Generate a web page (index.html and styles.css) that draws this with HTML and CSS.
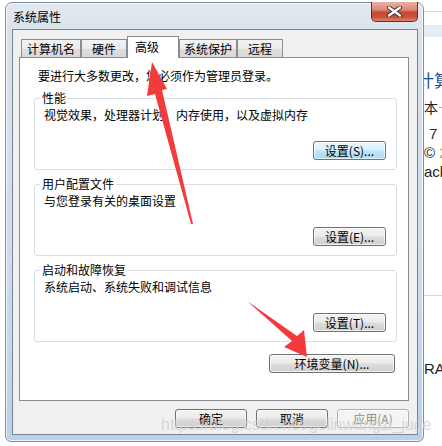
FILE: index.html
```html
<!DOCTYPE html>
<html lang="zh-CN">
<head>
  <meta charset="UTF-8" />
  <title>系统属性</title>
  <link rel="stylesheet" href="styles.css">
</head>
<body>

  <div class="edge-left"></div>

  <div class="window">
    <div class="titlebar">
      <span class="title">系统属性</span>
      <div class="close">
        <svg width="17" height="11" viewBox="0 0 17 11">
          <path d="M3 1.5 L14 9.5 M14 1.5 L3 9.5" stroke="#3b2a2a" stroke-width="4.2" stroke-linecap="round"/>
          <path d="M3 1.5 L14 9.5 M14 1.5 L3 9.5" stroke="#fff" stroke-width="2.4" stroke-linecap="round"/>
        </svg>
      </div>
    </div>

    <div class="client">
      <div class="tabs">
        <div class="tab w1">计算机名</div>
        <div class="tab w2">硬件</div>
        <div class="tab active w3">高级</div>
        <div class="tab w4">系统保护</div>
        <div class="tab w5">远程</div>
      </div>

      <div class="panel">
        <p class="intro">要进行大多数更改，您必须作为管理员登录。</p>

        <div class="group">
          <span class="legend">性能</span>
          <p class="desc">视觉效果，处理器计划，内存使用，以及虚拟内存</p>
          <button class="btn focus">设置(S)...</button>
        </div>

        <div class="group">
          <span class="legend">用户配置文件</span>
          <p class="desc">与您登录有关的桌面设置</p>
          <button class="btn">设置(E)...</button>
        </div>

        <div class="group">
          <span class="legend">启动和故障恢复</span>
          <p class="desc">系统启动、系统失败和调试信息</p>
          <button class="btn">设置(T)...</button>
        </div>

        <button class="btn env">环境变量(N)...</button>
      </div>

      <div class="actions">
        <button class="btn wide">确定</button>
        <button class="btn wide">取消</button>
        <button class="btn wide" disabled>应用(A)</button>
      </div>
    </div>
  </div>

  <div class="edge-right">
    <div class="bg-line top"></div>
    <div class="bg-band"></div>
    <div class="frag blue">计算</div>
    <div class="frag ben">本<span class="rule"></span></div>
    <div class="frag seven">7 :</div>
    <div class="frag copy">© <span class="orange">2</span></div>
    <div class="frag ack">ack</div>
    <div class="bg-line mid"></div>
    <div class="frag ra">RA</div>
  </div>

  <!-- arrows + watermark drawn over the screenshot -->
  <svg class="marks" width="442" height="446" viewBox="0 0 442 446">
    <polygon points="152,62 167,89 162,90 193,224 191,224 155,94 147,96" fill="#f33b3b"/>
    <polygon points="247,301 297,336 304,330 307,357 284,347 292,341" fill="#f33b3b"/>
  </svg>
  <div class="watermark">https://blog.csdn.net/gelinwangzi_juge</div>

</body>
</html>
```

FILE: styles.css
```css
* { box-sizing: border-box; margin: 0; padding: 0; }

body {
  width: 442px; height: 446px; overflow: hidden;
  display: flex; align-items: flex-start;
  background: #fff;
  font-family: "Noto Sans CJK SC", "Liberation Sans", sans-serif;
  font-size: 12px; color: #000;
  position: relative;
}

.edge-left { width: 5px; height: 446px; flex: none; }

.window {
  width: 419px; height: 440px; margin-top: 2px; flex: none;
  border: 1px solid #7f8fa2; border-radius: 7px 7px 6px 6px;
  padding: 0 5px 6px 6px;
  background: linear-gradient(to bottom, #e2e8ef 0, #d9e2ec 30px, #cddcee 60%, #b9d1ec 100%);
  box-shadow: inset 0 0 0 1px rgba(255,255,255,0.75);
  display: flex; flex-direction: column;
}

.titlebar {
  height: 26px; display: flex; align-items: flex-start;
}

.title { margin: 6px 0 0 1px; line-height: 16px; }

.close {
  margin: -1px 0 0 auto;
  width: 47px; height: 20px;
  border: 1px solid #5b3128; border-top: none;
  border-radius: 0 0 5px 5px;
  background: linear-gradient(to bottom, #eab1a4 0, #dd8a78 40%, #c44a35 55%, #c9513c 80%, #e08670 100%);
  display: flex; align-items: center; justify-content: center;
}

.client {
  flex: 1;
  border: 1px solid #7a838d;
  background: #f0f0f0;
  padding: 6px 8px 0 6px;
}

.tabs { display: flex; align-items: flex-end; height: 21px; padding-left: 2px; }

.tab {
  height: 18px; line-height: 17px; text-align: center;
  border: 1px solid #898c95; border-bottom: none;
  background: linear-gradient(to bottom, #f3f3f3 0, #ebebeb 50%, #dedede 51%, #d9d9d9 100%);
}

.tab.active {
  height: 22px; margin-bottom: -1px; line-height: 20px;
  background: #fff; position: relative; z-index: 1;
  text-align: left; padding-left: 7px;
}

.w1 { width: 60px; }
.w2 { width: 46px; }
.w3 { width: 52px; }
.w4 { width: 58px; }
.w5 { width: 46px; }

.panel {
  height: 344px;
  border: 1px solid #898c95;
  background: #fff;
  padding: 10px 11px 0 14px;
  display: flex; flex-direction: column;
}

.intro { line-height: 16px; margin-left: 4px; }

.group {
  height: 72px; margin-top: 14px;
  border: 1px solid #d5dfe5; border-radius: 3px;
  padding: 0 10px 9px 9px;
  display: flex; flex-direction: column; align-items: flex-start;
}

.legend {
  margin: -9px 0 0 -4px; padding: 0 2px;
  line-height: 16px; background: #fff;
}

.desc { line-height: 16px; margin-top: 1px; }

.btn {
  height: 19px; padding: 0;
  font-family: inherit; font-size: 12px; color: #000; line-height: 16px;
  border: 1px solid #707070; border-radius: 3px;
  background: linear-gradient(to bottom, #f3f3f3 0, #ebebeb 48%, #dddddd 52%, #cfcfcf 100%);
  box-shadow: inset 0 0 0 1px rgba(255,255,255,0.7);
}

.group .btn { width: 73px; margin-top: auto; align-self: flex-end; }

.btn.focus {
  border-color: #3c7fb1;
  background: linear-gradient(to bottom, #eaf6fd 0, #d9f0fc 48%, #bee6fd 52%, #a7d9f5 100%);
}

.btn.env { width: 126px; margin: 12px 2px 0 auto; }

.actions { display: flex; justify-content: flex-end; gap: 9px; margin-top: 8px; }

.btn.wide { width: 72px; }

.btn:disabled {
  color: #8d8d8d; border-color: #adb2b5;
  background: #f4f4f4;
}

.edge-right {
  width: 18px; height: 446px; flex: none; overflow: hidden;
  font-family: "Liberation Sans", "Noto Sans CJK SC", sans-serif;
}

.bg-line { height: 1px; background: #d4d7db; }
.bg-line.top { margin-top: 11px; }
.bg-band { height: 12px; margin-top: 13px; background: #e6ecf4; }
.bg-line.mid { margin-top: 114px; }

.frag { white-space: nowrap; line-height: 18px; }
.frag.blue {
  margin: 34px 0 0 -7px; font-size: 17px; color: #1f4f9c;
  font-family: "Noto Sans CJK SC", sans-serif;
}
.frag.ben {
  margin-top: 9px; font-size: 14px; color: #222;
  font-family: "Noto Sans CJK SC", sans-serif;
  display: flex; align-items: center;
}
.rule { display: inline-block; width: 10px; height: 1px; background: #aaa; margin-left: 1px; }
.frag.seven { margin: 9px 0 0 5px; font-size: 15px; color: #1d2f4f; }
.frag.copy { margin-top: 1px; font-size: 15px; color: #222; }
.orange { color: #e59a2b; }
.frag.ack { margin-top: 1px; font-size: 15px; color: #222; }
.frag.ra { margin-top: 64px; font-size: 15px; color: #222; }

.marks { position: absolute; left: 0; top: 0; pointer-events: none; z-index: 5; }

.watermark {
  position: absolute; left: 161px; top: 416px; z-index: 6;
  font-family: "Liberation Sans", sans-serif; font-size: 16px;
  color: rgba(190,190,190,0.6);
  text-shadow: 0 0 1px rgba(255,255,255,0.5);
  white-space: nowrap; pointer-events: none;
}
```
